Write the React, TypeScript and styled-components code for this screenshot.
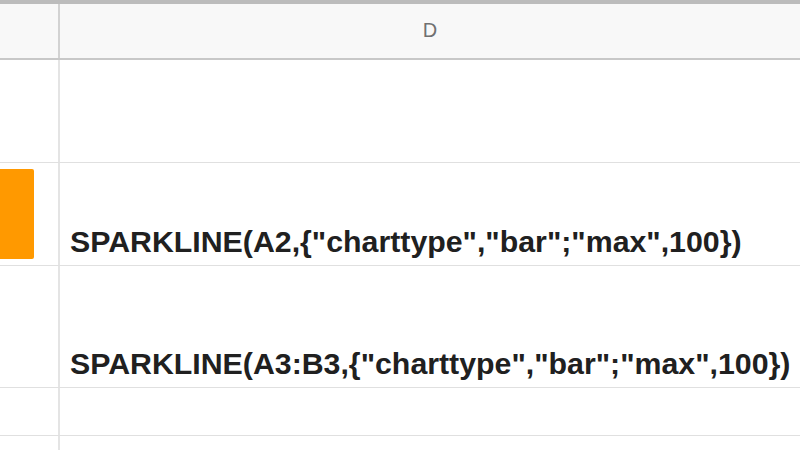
import styled, { createGlobalStyle } from 'styled-components';

const GlobalStyle = createGlobalStyle`
  html, body {
    margin: 0;
    padding: 0;
    background: #ffffff;
  }
`;

type RowData = {
  height: number;
  bar?: number;
  formula?: string;
};

const rows: RowData[] = [
  { height: 102 },
  { height: 102, bar: 34, formula: '=SPARKLINE(A2,{"charttype","bar";"max",100})' },
  { height: 121, formula: '=SPARKLINE(A3:B3,{"charttype","bar";"max",100})' },
  { height: 47 },
  { height: 40 },
];

const App = () => {
  return (
    <>
      <GlobalStyle />
      <Sheet>
        <HeaderRow>
          <HeaderCell $divider />
          <HeaderCell>D</HeaderCell>
        </HeaderRow>
        {rows.map((row, i) => (
          <Row key={i} $height={row.height}>
            <BarCell>{row.bar ? <Bar style={{ width: row.bar }} /> : null}</BarCell>
            <TextCell>{row.formula ? row.formula.slice(1) : ''}</TextCell>
          </Row>
        ))}
      </Sheet>
    </>
  );
};

const Sheet = styled.div`
  width: 800px;
  height: 450px;
  overflow: hidden;
  background: #ffffff;
  border-top: 4px solid #bcbcbc;
  box-sizing: border-box;
  font-family: 'Liberation Sans', Arial, sans-serif;
`;

const HeaderRow = styled.div`
  display: grid;
  grid-template-columns: 60px 1fr;
  height: 54px;
  background: #f8f8f8;
  border-bottom: 2px solid #c8c8c8;
`;

const HeaderCell = styled.div<{ $divider?: boolean }>`
  display: flex;
  align-items: center;
  justify-content: center;
  padding-bottom: 1px;
  font-size: 20px;
  color: #707070;
  border-right: ${({ $divider }) => ($divider ? '2px solid #d2d2d2' : 'none')};
`;

const Row = styled.div<{ $height: number }>`
  display: grid;
  grid-template-columns: 60px 1fr;
  height: ${({ $height }) => $height}px;
  border-bottom: 1px solid #e0e0e0;
`;

const BarCell = styled.div`
  display: flex;
  align-items: stretch;
  padding: 6px 0;
  border-right: 2px solid #e4e4e4;
`;

const Bar = styled.div`
  background: #ff9900;
  border-radius: 0 2px 2px 0;
`;

const TextCell = styled.div`
  display: flex;
  align-items: flex-end;
  padding: 0 0 8px 10px;
  font-size: 30.3px;
  line-height: 30px;
  font-weight: bold;
  color: #202020;
  white-space: nowrap;
  overflow: visible;
`;

export default App;
